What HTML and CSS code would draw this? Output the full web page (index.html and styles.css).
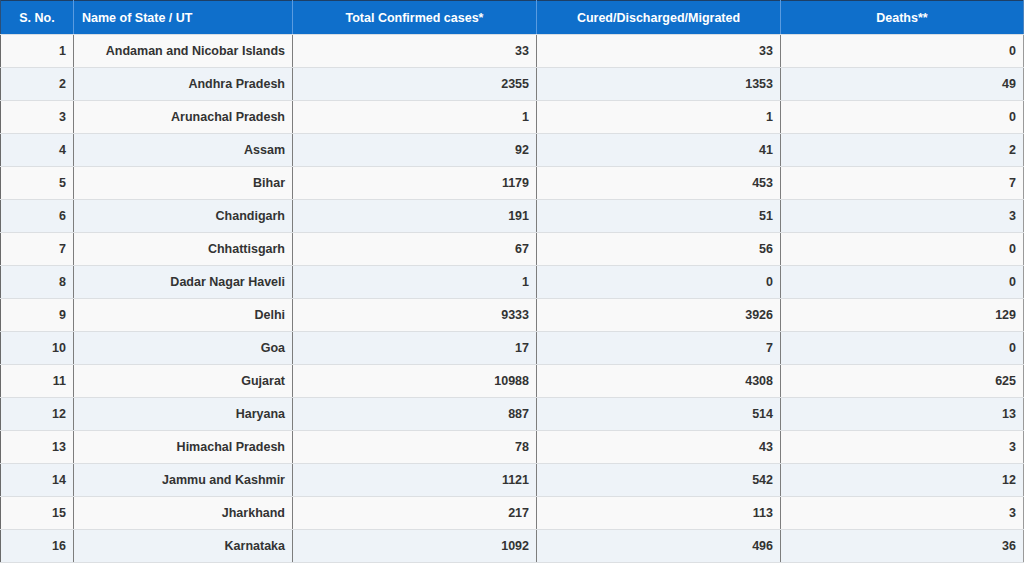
FILE: index.html
```html
<!DOCTYPE html>
<html>
<head>
<meta charset="utf-8">
<link rel="stylesheet" href="styles.css">
</head>
<body>
<table class="covid">
<colgroup>
<col class="c1"><col class="c2"><col class="c3"><col class="c4"><col class="c5">
</colgroup>
<thead>
<tr>
<th class="center">S. No.</th>
<th class="left">Name of State / UT</th>
<th class="center">Total Confirmed cases*</th>
<th class="center">Cured/Discharged/Migrated</th>
<th class="center">Deaths**</th>
</tr>
</thead>
<tbody>
<tr><td>1</td><td>Andaman and Nicobar Islands</td><td>33</td><td>33</td><td>0</td></tr>
<tr><td>2</td><td>Andhra Pradesh</td><td>2355</td><td>1353</td><td>49</td></tr>
<tr><td>3</td><td>Arunachal Pradesh</td><td>1</td><td>1</td><td>0</td></tr>
<tr><td>4</td><td>Assam</td><td>92</td><td>41</td><td>2</td></tr>
<tr><td>5</td><td>Bihar</td><td>1179</td><td>453</td><td>7</td></tr>
<tr><td>6</td><td>Chandigarh</td><td>191</td><td>51</td><td>3</td></tr>
<tr><td>7</td><td>Chhattisgarh</td><td>67</td><td>56</td><td>0</td></tr>
<tr><td>8</td><td>Dadar Nagar Haveli</td><td>1</td><td>0</td><td>0</td></tr>
<tr><td>9</td><td>Delhi</td><td>9333</td><td>3926</td><td>129</td></tr>
<tr><td>10</td><td>Goa</td><td>17</td><td>7</td><td>0</td></tr>
<tr><td>11</td><td>Gujarat</td><td>10988</td><td>4308</td><td>625</td></tr>
<tr><td>12</td><td>Haryana</td><td>887</td><td>514</td><td>13</td></tr>
<tr><td>13</td><td>Himachal Pradesh</td><td>78</td><td>43</td><td>3</td></tr>
<tr><td>14</td><td>Jammu and Kashmir</td><td>1121</td><td>542</td><td>12</td></tr>
<tr><td>15</td><td>Jharkhand</td><td>217</td><td>113</td><td>3</td></tr>
<tr><td>16</td><td>Karnataka</td><td>1092</td><td>496</td><td>36</td></tr>
</tbody>
</table>
</body>
</html>
```
FILE: styles.css
```css
html, body {
  margin: 0;
  padding: 0;
  background: #ffffff;
}
body {
  font-family: "Liberation Sans", Arial, sans-serif;
  width: 1024px;
  height: 564px;
  overflow: hidden;
}
.covid {
  width: 1023px;
  border-collapse: collapse;
  table-layout: fixed;
  border-top: 1px solid #1d3f66;
}
.c1 { width: 73px; }
.c2 { width: 219px; }
.c3 { width: 244px; }
.c4 { width: 244px; }
.c5 { width: 243px; }
.covid th {
  background: #0f6fcb;
  color: #ffffff;
  font-size: 12.5px;
  font-weight: bold;
  height: 33px;
  padding: 0 8px;
  border-left: 1px solid #5a9be0;
  border-bottom: 1px solid #d7dde3;
}
.covid th:first-child {
  border-left: 1px solid #2b4f78;
}
.covid th.center { text-align: center; }
.covid th.left { text-align: left; }
.covid td {
  height: 32px;
  padding: 0 7px 0 8px;
  text-align: right;
  font-size: 12.5px;
  font-weight: bold;
  color: #333333;
  border-left: 1px solid #7d7d7d;
  border-bottom: 1px solid #dcdfe2;
}
.covid td:first-child {
  border-left: 1px solid #6a6a6a;
}
.covid td:last-child {
  border-right: 1px solid #9a9a9a;
}
.covid th:last-child {
  border-right: 1px solid #4b84bf;
}
.covid tbody tr:nth-child(odd) td { background: #f9f9f9; }
.covid tbody tr:nth-child(even) td { background: #eef3f8; }
```
